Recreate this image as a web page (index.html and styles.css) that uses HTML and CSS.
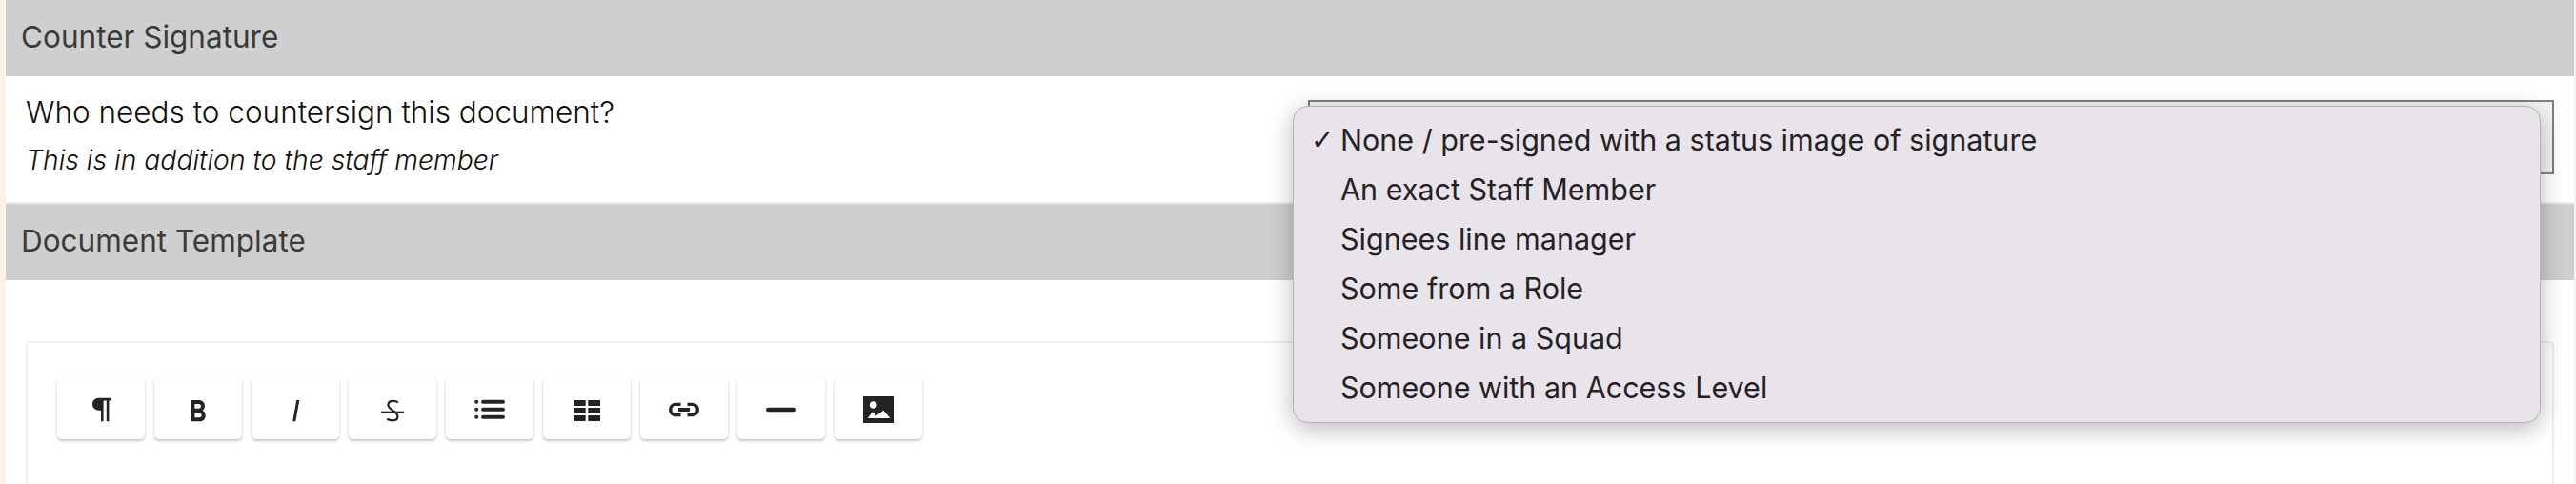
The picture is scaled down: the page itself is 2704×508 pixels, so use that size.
FILE: index.html
```html
<!DOCTYPE html>
<html lang="en">
<head>
    <meta charset="UTF-8">
    <title>Document settings</title>
    <link rel="stylesheet" href="styles.css">
</head>
<body>
    <div class="page">
        <h2 class="section-header">Counter Signature</h2>

        <div class="field-row">
            <div class="field-label">
                <div class="field-title">Who needs to countersign this document?</div>
                <div class="field-hint">This is in addition to the staff member</div>
            </div>
            <div class="select-box"></div>
        </div>

        <h2 class="section-header">Document Template</h2>

        <div class="editor">
            <div class="toolbar">
                <button class="tool-btn">
                    <svg viewBox="0 0 40 33"><path d="M30 5.7H17.5a6.5 6.5 0 0 0 0 13H20v11.6h2.6V8.4h3.2v21.9h2.6V8.4H30z"/></svg>
                </button>
                <button class="tool-btn">
                    <svg viewBox="0 0 40 33"><path transform="translate(1.8 1.6) scale(1.46 1.59)" d="M15.6 10.79c.97-.67 1.65-1.77 1.65-2.79 0-2.26-1.75-4-4-4H7v14h7.04c2.09 0 3.71-1.7 3.71-3.79 0-1.52-.86-2.82-2.15-3.42zM10 6.5h3c.83 0 1.5.67 1.5 1.5s-.67 1.5-1.5 1.5h-3v-3zm3.5 9H10v-3h3.5c.83 0 1.5.67 1.5 1.5s-.67 1.5-1.5 1.5z"/></svg>
                </button>
                <button class="tool-btn">
                    <svg viewBox="0 0 40 33"><path d="M21.2 8h3.1l-4 22.3h-3z"/></svg>
                </button>
                <button class="tool-btn">
                    <svg viewBox="0 0 40 33">
                        <path class="line" stroke-width="2.2" d="M26 10.5C24.5 9.3 22.5 8.9 21 8.9 17.6 8.9 15.4 10.6 15.4 13 15.4 15.6 17.5 17 20.5 19 23.5 20.8 25.4 22.8 25.4 25.2 25.4 28 23 29.3 20 29.3 17.8 29.3 15.8 28.8 14.2 27.8"/>
                        <path d="M8 19.7h24v2H8z"/>
                    </svg>
                </button>
                <button class="tool-btn">
                    <svg viewBox="0 0 40 33">
                        <circle cx="6.2" cy="9.7" r="2"/><circle cx="6.2" cy="17.7" r="2"/><circle cx="6.2" cy="25.7" r="2"/>
                        <rect x="11" y="7.7" width="25" height="4" rx="2"/><rect x="11" y="15.7" width="25" height="4" rx="2"/><rect x="11" y="23.7" width="25" height="4" rx="2"/>
                    </svg>
                </button>
                <button class="tool-btn">
                    <svg viewBox="0 0 40 33">
                        <path d="M6 8h12.7v6H6zM21.3 8H34v6H21.3zM6 16h12.7v6H6zM21.3 16H34v6H21.3zM6 24h12.7v6H6zM21.3 24H34v6H21.3z"/>
                    </svg>
                </button>
                <button class="tool-btn">
                    <svg viewBox="0 0 40 33">
                        <path class="line" stroke-width="3.4" d="M16.5 12.4h-5.2a5.6 5.6 0 0 0 0 11.2h5.2M23.5 12.4h5.2a5.6 5.6 0 0 1 0 11.2h-5.2"/>
                        <path class="line" stroke-width="4" d="M14 18h12"/>
                    </svg>
                </button>
                <button class="tool-btn">
                    <svg viewBox="0 0 40 33"><rect x="4" y="15.7" width="32" height="4.6" rx="2.3"/></svg>
                </button>
                <button class="tool-btn">
                    <svg viewBox="0 0 40 33">
                        <path d="M4 4h32v28H4z"/>
                        <circle cx="14.7" cy="13" r="3.8" fill="#fff"/>
                        <path fill="#fff" d="M8.7 27L14 20.3 17.5 24.5 25.4 18.7 32.3 27z"/>
                    </svg>
                </button>
            </div>
        </div>

        <!-- open dropdown of the countersign select -->
        <ul class="select-menu">
            <li class="checked">None / pre-signed with a status image of signature</li>
            <li>An exact Staff Member</li>
            <li>Signees line manager</li>
            <li>Some from a Role</li>
            <li>Someone in a Squad</li>
            <li>Someone with an Access Level</li>
        </ul>
    </div>
</body>
</html>
```

FILE: styles.css
```css
* {
    margin: 0;
    padding: 0;
    box-sizing: border-box;
}

html, body {
    height: 100%;
    overflow: hidden;
}

body {
    background: #faf3e8;
    font-family: 'Inter', 'Noto Sans', sans-serif;
    color: #1c1c1c;
}

.page {
    position: relative;
    height: 100%;
    margin: 0 2px 0 6px;
    background: white;
    overflow: hidden;
}

.section-header {
    height: 80px;
    padding: 0 16px 4px;
    display: flex;
    align-items: center;
    background: #cfcfcf;
    color: #3a3a3a;
    font-size: 31.5px;
    font-weight: 400;
}

.field-row {
    height: 134px;
    padding: 25px 21px 0;
    display: flex;
    justify-content: space-between;
    align-items: flex-start;
    border-bottom: 2px solid #ececec;
}

.field-title {
    font-size: 31.5px;
    font-weight: 300;
    line-height: 26px;
    color: #111;
}

.field-hint {
    margin-top: 24px;
    font-size: 28.3px;
    font-weight: 300;
    line-height: 26px;
    font-style: italic;
    color: #111;
}

.select-box {
    width: 1308px;
    height: 78px;
    border: 2px solid #808080;
    background: #f4f4f4;
}

.editor {
    margin: 64px 21px 0;
    height: 300px;
    padding: 36px 31px;
    border: 2px solid #eeeeee;
    border-radius: 6px;
}

.toolbar {
    display: flex;
    gap: 10px;
}

.tool-btn {
    width: 92px;
    height: 65px;
    display: flex;
    align-items: center;
    justify-content: center;
    background: white;
    border: none;
    border-radius: 5px;
    box-shadow: 0 2px 3px rgba(0,0,0,0.22), 0 0 2px rgba(0,0,0,0.06);
}

.tool-btn svg {
    width: 40px;
    height: 33px;
    fill: #242424;
}

.tool-btn .line {
    fill: none;
    stroke: #242424;
}

.select-menu {
    position: absolute;
    top: 111px;
    left: 1351px;
    width: 1310px;
    height: 333px;
    padding: 10px 0;
    list-style: none;
    background: #e8e4ea;
    border: 1px solid #b4b4b4;
    border-radius: 16px;
    box-shadow: 0 6px 26px rgba(0,0,0,0.28);
    font-size: 30.5px;
    color: #242226;
}

.select-menu li {
    height: 52px;
    line-height: 50px;
    padding-left: 49px;
    position: relative;
}

.select-menu li.checked::before {
    content: "✓";
    position: absolute;
    left: 18px;
    font-family: 'DejaVu Sans', sans-serif;
    font-size: 29px;
    font-weight: 700;
}
```
